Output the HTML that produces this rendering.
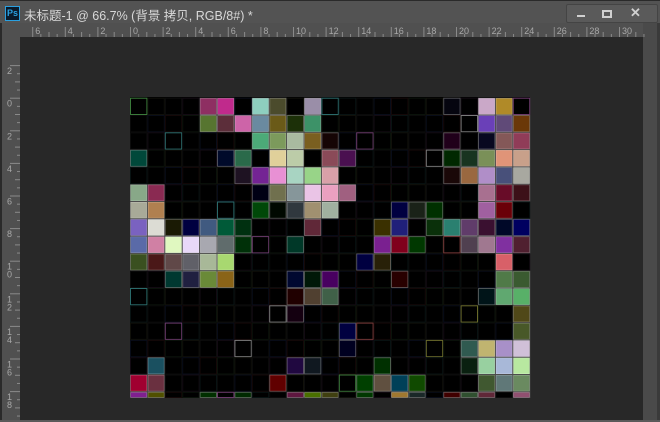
<!DOCTYPE html>
<html><head><meta charset="utf-8"><style>
html,body{margin:0;padding:0;background:#535353;overflow:hidden}
body{width:660px;height:422px;position:relative;font-family:"Liberation Sans","Noto Sans CJK SC",sans-serif}
.title{position:absolute;left:0;top:0;width:660px;height:22px;background:#535353;border-top:1px solid #2a2a2a}
.ps{position:absolute;left:5px;top:5px;width:13px;height:13px;border:1px solid #2aa0e0;background:#0a1a2a;color:#2aa0e0;font-size:9px;line-height:13px;text-align:center;font-weight:bold}
.tt{position:absolute;left:24px;top:4px;color:#d8d8d8;font-size:12.5px;white-space:nowrap}
.btns{position:absolute;left:566px;top:3px;width:90px;height:17px;background:#5a5a5a;border:1px solid #444;border-radius:2px}
</style></head><body>
<div class="title">
<div class="ps">Ps</div>
<div class="tt">未标题-1 @ 66.7% (背景 拷贝, RGB/8#) *</div>
<div class="btns">
<div style="position:absolute;left:10px;top:10px;width:8px;height:2px;background:#d0d0d0"></div>
<div style="position:absolute;left:35px;top:5px;width:6px;height:4px;border:2px solid #d0d0d0"></div>
<div style="position:absolute;left:63px;top:0px;color:#d0d0d0;font-size:13px;font-weight:bold">✕</div>
</div>
</div>
<svg width="660" height="422" style="position:absolute;left:0;top:0" xmlns="http://www.w3.org/2000/svg">
<rect x="0" y="23" width="660" height="399" fill="#4a4a4a"/>
<rect x="0" y="23" width="2" height="399" fill="#2a2a2a"/>
<rect x="657" y="23" width="3" height="399" fill="#3a3a3a"/>
<rect x="2" y="23" width="641" height="14" fill="#505050"/>
<rect x="2" y="23" width="18" height="398" fill="#505050"/>
<rect x="20" y="37" width="623" height="383" fill="#282828"/>
<rect x="643" y="37" width="14" height="385" fill="#4a4a4a"/>
<rect x="0" y="420" width="660" height="2" fill="#5a5a5a"/>
<g id="hr" fill="#a8a8a8" font-size="9" font-family="Liberation Sans">
</g>
<rect x="130" y="97" width="400" height="301" fill="#000"/>
<g id="tiles"></g>
</svg>
<script>
var S='http://www.w3.org/2000/svg';var svg=document.querySelector('svg');
function el(n,a,p){var e=document.createElementNS(S,n);for(var k in a)e.setAttribute(k,a[k]);(p||svg).appendChild(e);return e}
var hr=document.getElementById('hr');
for(var k=-3;k<=15;k++){var x=130+32.6*k;el('rect',{x:x,y:27,width:1,height:10,fill:'#8a8a8a'},hr);
for(var m=1;m<4;m++)el('rect',{x:x+8.15*m,y:(m==2?32:34),width:1,height:(m==2?5:3),fill:'#8a8a8a'},hr);
var t=el('text',{x:x+3,y:34},hr);t.textContent=Math.abs(2*k);}
for(var k=-1;k<=9;k++){var y=97.7+32.6*k;el('rect',{x:10,y:y,width:10,height:1,fill:'#8a8a8a'},hr);
for(var m=1;m<4;m++)el('rect',{x:(m==2?15:17),y:y+8.15*m,width:(m==2?5:3),height:1,fill:'#8a8a8a'},hr);
var s=String(Math.abs(2*k));for(var i=0;i<s.length;i++){var t=el('text',{x:7,y:y+9+i*8},hr);t.textContent=s[i];}}
var tl=document.getElementById('tiles');
var C={
0:{4:'#8e2f62',5:'#c02a8c',7:'#8ecfbf',8:'#4b4b2c',10:'#9a8ea8',18:'#05050f',20:'#caa8c8',21:'#b08a28'},
1:{4:'#577530',5:'#5c2e3a',6:'#cd64a8',7:'#6a8aa0',8:'#6a5a18',9:'#1c3008',10:'#3d9268',20:'#6a40b8',21:'#604a78',22:'#6a3808'},
2:{7:'#4caa78',8:'#7c9a5c',9:'#a9baa0',10:'#7a5f20',11:'#150505',18:'#20001a',20:'#080820',21:'#845858',22:'#903c58'},
3:{0:'#00483a',5:'#000a2a',6:'#2a6a4a',8:'#e0d09a',9:'#bccca8',11:'#8a4a58',12:'#4a1050',18:'#002800',19:'#183420',20:'#7a9058',21:'#e09478',22:'#c8a08a'},
4:{6:'#1e1222',7:'#742494',8:'#e890d4',9:'#a8d4c2',10:'#98d488',11:'#d8a0a8',18:'#1a0808',19:'#9a6840',20:'#b08ec8',21:'#48507a',22:'#a8a8a0'},
5:{0:'#88a888',1:'#8a2a52',7:'#000014',8:'#70704e',9:'#86969a',10:'#eac4e6',11:'#eaa0c0',12:'#a06080',20:'#a87090',21:'#680c28',22:'#3c1018'},
6:{0:'#a8aa98',1:'#b08050',7:'#004808',8:'#000800',9:'#30383e',10:'#a09070',11:'#a0b0a0',15:'#000040',16:'#1a2218',17:'#003000',20:'#a060a0',21:'#6a0008'},
7:{0:'#7a62c0',1:'#dcdcd4',2:'#1a1a04',3:'#000040',4:'#405a80',5:'#005a38',6:'#003010',10:'#602838',14:'#3a3000',15:'#20207a',17:'#0a300a',18:'#2a8070',19:'#603c6a',20:'#3a1030',21:'#000828',22:'#000060'},
8:{0:'#5a6aa8',1:'#d080a4',2:'#e0f8c0',3:'#e8d8f8',4:'#a8a8b0',5:'#606c6c',6:'#003008',9:'#003828',14:'#7a2090',15:'#80001c',16:'#003800',19:'#504050',20:'#a07890',21:'#8030a0',22:'#502030'},
9:{0:'#3a5020',1:'#4a1818',2:'#604848',3:'#606068',4:'#a8b898',5:'#a8d870',13:'#000040',14:'#282008',21:'#d86068'},
10:{2:'#003830',3:'#202040',4:'#6a8a38',5:'#8a6418',9:'#000830',10:'#001808',11:'#480060',15:'#280000',21:'#507a48',22:'#3a5a30'},
11:{9:'#200000',10:'#504030',11:'#406048',20:'#001418',21:'#60a870',22:'#58b068'},
12:{9:'#140010',22:'#504818'},
13:{12:'#000040',22:'#485828'},
14:{12:'#000020',19:'#305a50',20:'#c0b470',21:'#a890c8',22:'#d0c0d8'},
15:{1:'#1a5060',9:'#200840',10:'#101820',14:'#003000',19:'#0a2010',20:'#98d0a0',21:'#a8b8d8',22:'#b8e8a0'},
16:{0:'#a00030',1:'#6a3040',8:'#600000',13:'#004000',14:'#605040',15:'#004058',16:'#104a00',20:'#405830',21:'#607878',22:'#6a8a60'},
17:{0:'#802090',1:'#505000',4:'#003000',6:'#002a00',9:'#601840',10:'#4a7000',11:'#404010',13:'#003800',15:'#a07830',16:'#1a2828',18:'#400000',19:'#305030',20:'#602838',22:'#905070'}};
var bc=['#0a120a','#120a12','#080c18','#10100a','#081212','#140808','#0c0c0c','#0a0a0a'];
var bright=['#3a7a3a','#6a3a6a','#3a4a8a','#6a6a2a','#2a6a6a','#7a3a3a','#7a7a7a'];
for(var r=0;r<18;r++)for(var c=0;c<23;c++){var x=130+17.4*c,y=97.7+17.3*r;var h=Math.min(17.3,398-y);if(h<=0)continue;
var f=(C[r]&&C[r][c])||'#000';var q=(r*13+c*7+r*c)%11;
var st=f=='#000'?(q==0?bright[(r+c)%7]:bc[(r*7+c*3)%8]):'rgba(255,255,255,0.3)';
el('rect',{x:x+0.5,y:y+0.5,width:16.4,height:h-1,fill:f,stroke:st,'stroke-width':1},tl);}
</script>
</body></html>
